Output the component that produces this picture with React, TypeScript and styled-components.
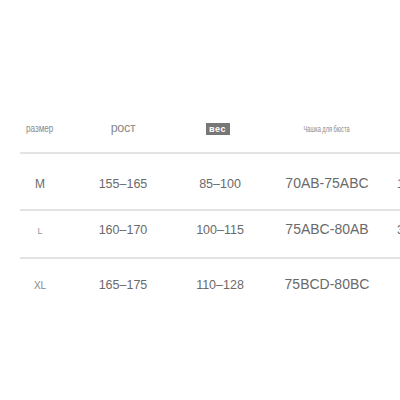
import React from "react";
import styled, { createGlobalStyle } from "styled-components";

const Global = createGlobalStyle`
  html, body { margin: 0; padding: 0; background: #fff; }
  body { width: 400px; height: 400px; overflow: hidden; font-family: "Liberation Sans", Arial, sans-serif; }
`;

const Page = styled.div`
  width: 400px;
  height: 400px;
  padding-top: 100px;
  box-sizing: border-box;
  overflow: hidden;
`;

const Row = styled.div<{ $h: number; $pt: number; $line?: boolean }>`
  display: grid;
  grid-template-columns: 60px 86px 108px 106px 1fr;
  margin-left: 20px;
  height: ${(p) => p.$h}px;
  padding-top: ${(p) => p.$pt}px;
  box-sizing: border-box;
  border-top: ${(p) => (p.$line ? "2px solid #e3e3e3" : "none")};
  align-items: start;
`;

const Cell = styled.div<{ $first?: boolean; $edge?: boolean }>`
  text-align: ${(p) => (p.$edge ? "left" : "center")};
  padding-right: ${(p) => (p.$first ? "20px" : "0")};
  padding-left: ${(p) => (p.$edge ? "17px" : "0")};
  white-space: nowrap;
  line-height: 16px;
  height: 16px;
  color: #666;
`;

const SmallLabel = styled.span`
  display: inline-block;
  font-size: 10.5px;
  color: #8a8a8a;
  transform: scaleX(0.78);
`;

const HeadLabel = styled.span`
  font-size: 12.5px;
  color: #8a8a8a;
  letter-spacing: -0.3px;
`;

const Badge = styled.span`
  display: inline-block;
  background: #777;
  color: #fff;
  font-size: 9px;
  font-weight: bold;
  line-height: 12px;
  width: 24px;
  letter-spacing: 0.6px;
  text-align: left;
  padding-left: 3px;
  box-sizing: border-box;
  margin-left: -4px;
`;

const Tiny = styled.span`
  display: inline-block;
  font-size: 9px;
  color: #888;
  transform: scaleX(0.63);
`;

const Size = styled.span<{ $fs: number; $c: string }>`
  font-size: ${(p) => p.$fs}px;
  color: ${(p) => p.$c};
`;

const Num = styled.span`
  font-size: 12.5px;
  color: #6a6a6a;
`;

const Cup = styled.span`
  font-size: 14px;
  color: #6a6a6a;
`;

const rows = [
  { size: "M", fs: 12, c: "#6a6a6a", h: "155–165", w: "85–100", cup: "70AB-75ABC", edge: "1", rh: 57, pt: 21 },
  { size: "L", fs: 9, c: "#999", h: "160–170", w: "100–115", cup: "75ABC-80AB", edge: "3", rh: 48, pt: 10 },
  { size: "XL", fs: 10, c: "#888", h: "165–175", w: "110–128", cup: "75BCD-80BC", edge: "", rh: 52, pt: 17 },
];

export default function App() {
  return (
    <Page>
      <Global />
      <Row $h={52} $pt={19}>
        <Cell $first>
          <SmallLabel>размер</SmallLabel>
        </Cell>
        <Cell>
          <HeadLabel>рост</HeadLabel>
        </Cell>
        <Cell>
          <Badge>вес</Badge>
        </Cell>
        <Cell>
          <Tiny>Чашка для бюста</Tiny>
        </Cell>
        <Cell $edge />
      </Row>
      {rows.map((r) => (
        <Row key={r.size} $h={r.rh} $pt={r.pt} $line>
          <Cell $first>
            <Size $fs={r.fs} $c={r.c}>{r.size}</Size>
          </Cell>
          <Cell>
            <Num>{r.h}</Num>
          </Cell>
          <Cell>
            <Num>{r.w}</Num>
          </Cell>
          <Cell>
            <Cup>{r.cup}</Cup>
          </Cell>
          <Cell $edge>
            <Num>{r.edge}</Num>
          </Cell>
        </Row>
      ))}
    </Page>
  );
}
